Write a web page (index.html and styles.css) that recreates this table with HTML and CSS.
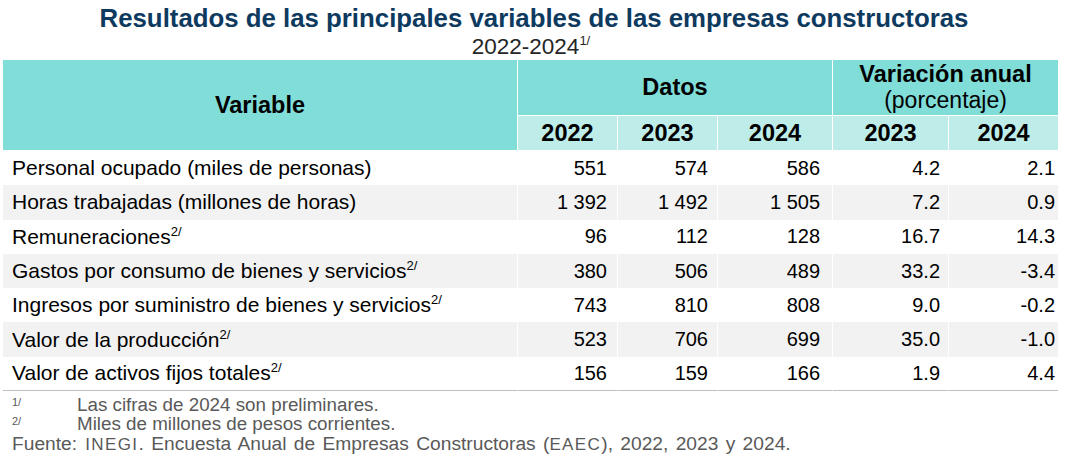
FILE: index.html
```html
<!DOCTYPE html>
<html lang="es">
<head>
<meta charset="utf-8">
<title>Resultados de las principales variables de las empresas constructoras</title>
<link rel="stylesheet" href="styles.css">
</head>
<body>
<div class="page">
  <h1 class="title">Resultados de las principales variables de las empresas constructoras</h1>
  <p class="subtitle">2022-2024<sup>1/</sup></p>
  <table class="data">
    <colgroup>
      <col class="c-var">
      <col class="c-22">
      <col class="c-23">
      <col class="c-24">
      <col class="c-v23">
      <col class="c-v24">
    </colgroup>
    <thead>
      <tr class="h1">
        <th rowspan="2" class="h-var">Variable</th>
        <th colspan="3" class="h-group">Datos</th>
        <th colspan="2" class="h-group h-var-anual">Variación anual<br><span class="h-sub">(porcentaje)</span></th>
      </tr>
      <tr class="h2">
        <th>2022</th>
        <th>2023</th>
        <th>2024</th>
        <th>2023</th>
        <th>2024</th>
      </tr>
    </thead>
    <tbody>
      <tr><td class="lbl">Personal ocupado (miles de personas)</td><td>551</td><td>574</td><td>586</td><td>4.2</td><td>2.1</td></tr>
      <tr class="alt"><td class="lbl">Horas trabajadas (millones de horas)</td><td>1 392</td><td>1 492</td><td>1 505</td><td>7.2</td><td>0.9</td></tr>
      <tr><td class="lbl">Remuneraciones<sup>2/</sup></td><td>96</td><td>112</td><td>128</td><td>16.7</td><td>14.3</td></tr>
      <tr class="alt"><td class="lbl">Gastos por consumo de bienes y servicios<sup>2/</sup></td><td>380</td><td>506</td><td>489</td><td>33.2</td><td>-3.4</td></tr>
      <tr><td class="lbl">Ingresos por suministro de bienes y servicios<sup>2/</sup></td><td>743</td><td>810</td><td>808</td><td>9.0</td><td>-0.2</td></tr>
      <tr class="alt"><td class="lbl">Valor de la producción<sup>2/</sup></td><td>523</td><td>706</td><td>699</td><td>35.0</td><td>-1.0</td></tr>
      <tr class="last"><td class="lbl">Valor de activos fijos totales<sup>2/</sup></td><td>156</td><td>159</td><td>166</td><td>1.9</td><td>4.4</td></tr>
    </tbody>
  </table>
  <div class="notes">
    <div class="note"><span class="mark">1/</span><span>Las cifras de 2024 son preliminares.</span></div>
    <div class="note"><span class="mark">2/</span><span>Miles de millones de pesos corrientes.</span></div>
    <div class="source">Fuente:<span class="sc"> INEGI</span>. Encuesta Anual de Empresas Constructoras (<span class="sc">EAEC</span>), 2022, 2023 y 2024.</div>
  </div>
</div>
</body>
</html>
```
FILE: styles.css
```css
html, body {
  margin: 0;
  padding: 0;
  background: #ffffff;
}
body {
  font-family: "Liberation Sans", Arial, sans-serif;
  color: #000;
}
.page {
  width: 1068px;
  padding: 0 0 0 3px;
  box-sizing: border-box;
}
.title {
  margin: 0 0 0 -3px;
  padding-top: 4px;
  font-size: 25.8px;
  line-height: 29px;
  font-weight: bold;
  color: #0e3a60;
  text-align: center;
  width: 1068px;
}
.subtitle {
  margin: 0 0 0 -3px;
  font-size: 22.5px;
  line-height: 27px;
  text-align: center;
  color: #262626;
  width: 1062px;
}
.subtitle sup {
  font-size: 13px;
  vertical-align: 9px;
  line-height: 0;
}
.data {
  border-collapse: separate;
  border-spacing: 0;
  table-layout: fixed;
  width: 1055px;
}
.c-var { width: 515px; }
.c-22 { width: 100px; }
.c-23 { width: 100px; }
.c-24 { width: 115px; }
.c-v23 { width: 116px; }
.c-v24 { width: 109px; }

.data th {
  font-weight: bold;
  font-size: 23.5px;
  padding: 0;
  border-right: 1px solid #fff;
  border-bottom: 1px solid #fff;
  text-align: center;
}
.data th:last-child { border-right: none; }
.h1 th {
  background: #80ddd8;
  height: 54px;
}
.h-var-anual {
  line-height: 26px;
  vertical-align: top;
  padding-top: 1px !important;
}
.h-sub {
  font-weight: normal;
  font-size: 23px;
}
.h2 th {
  background: #bdece9;
  height: 34px;
}
.data td {
  font-size: 20px;
  height: 34.3px;
  padding: 0 10px 0 0;
  text-align: right;
  border-right: 1px solid #fff;
  vertical-align: middle;
  box-sizing: border-box;
}
.data td:last-child { border-right: none; padding-right: 3px; }
.data td:nth-child(3) { padding-right: 9px; }
.data td:nth-child(4) { padding-right: 12px; }
.data td:nth-child(5) { padding-right: 8px; }
.data td.lbl {
  text-align: left;
  padding-left: 9px;
  padding-right: 0;
  font-size: 21px;
}
.data tr.alt td { background: #f2f2f2; }
.data tr.last td { border-bottom: 1px solid #bfbfbf; }
.data td sup {
  font-size: 13px;
  vertical-align: 8px;
  line-height: 0;
}
.notes {
  font-size: 18.8px;
  color: #595959;
  line-height: 19px;
  padding-top: 4px;
}
.note {
  display: flex;
}
.note .mark {
  width: 65px;
  flex: none;
  padding-left: 9px;
  font-size: 11px;
  line-height: 14px;
}
.source {
  padding-left: 9px;
  padding-top: 1px;
  font-size: 19.2px;
  word-spacing: 2px;
}
.sc {
  font-size: 17px;
  letter-spacing: 1.4px;
}
```
